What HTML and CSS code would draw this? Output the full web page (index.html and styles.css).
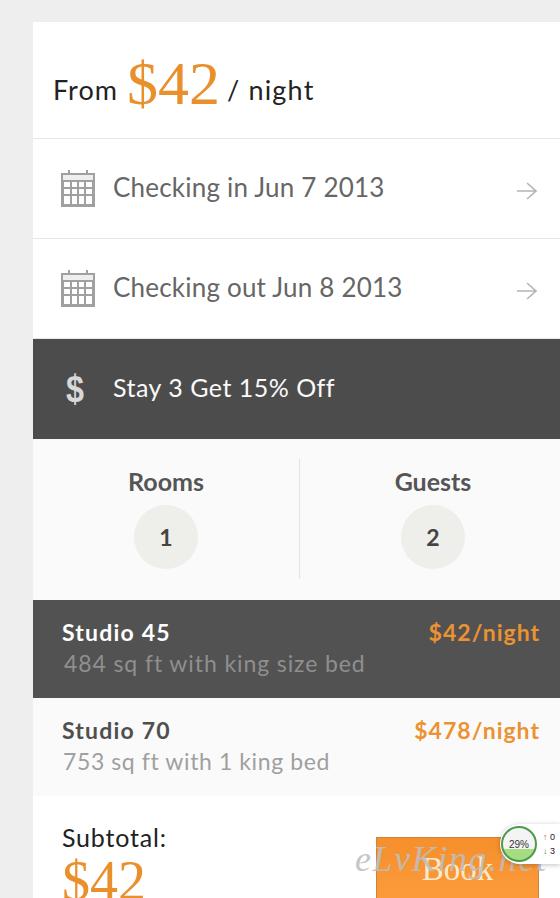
FILE: index.html
```html
<!DOCTYPE html>
<html lang="en">
<head>
<meta charset="utf-8">
<title>Booking</title>
<link rel="stylesheet" href="styles.css">
</head>
<body>
<main class="card">
  <header class="head"><span class="from">From</span><span class="price">$42</span><span class="from night">/ night</span></header>
  <div class="row">
    <svg class="cal" viewBox="0 0 34 37" width="34" height="37"><path d="M8 0v4M26 0v4" stroke="#a0a0a0" stroke-width="2" fill="none"/><path d="M0 3h34v34H0z" fill="#a0a0a0"/><path d="M2 5h30v5H2z" fill="#eee"/><g fill="#fff"><path d="M3 12h6v5H3zM11 12h5v5h-5zM18 12h5v5h-5zM25 12h6v5h-6zM3 19h6v5H3zM11 19h5v5h-5zM18 19h5v5h-5zM25 19h6v5h-6zM3 26h6v8H3zM11 26h5v8h-5zM18 26h5v8h-5zM25 26h6v8h-6z"/></g></svg>
    <span class="label">Checking in Jun 7 2013</span>
    <svg class="arrow" viewBox="0 0 20 18" width="20" height="18"><path d="M0 9h19M10 1l9 8-9 8" stroke="#b5b5b5" stroke-width="1.6" fill="none"/></svg>
  </div>
  <div class="row">
    <svg class="cal" viewBox="0 0 34 37" width="34" height="37"><path d="M8 0v4M26 0v4" stroke="#a0a0a0" stroke-width="2" fill="none"/><path d="M0 3h34v34H0z" fill="#a0a0a0"/><path d="M2 5h30v5H2z" fill="#eee"/><g fill="#fff"><path d="M3 12h6v5H3zM11 12h5v5h-5zM18 12h5v5h-5zM25 12h6v5h-6zM3 19h6v5H3zM11 19h5v5h-5zM18 19h5v5h-5zM25 19h6v5h-6zM3 26h6v8H3zM11 26h5v8h-5zM18 26h5v8h-5zM25 26h6v8h-6z"/></g></svg>
    <span class="label">Checking out Jun 8 2013</span>
    <svg class="arrow" viewBox="0 0 20 18" width="20" height="18"><path d="M0 9h19M10 1l9 8-9 8" stroke="#b5b5b5" stroke-width="1.6" fill="none"/></svg>
  </div>
  <div class="promo"><span class="dollar">$</span><span class="promo-text">Stay 3 Get 15% Off</span></div>
  <section class="counts">
    <div class="count"><span class="count-title">Rooms</span><span class="circle">1</span></div>
    <div class="count"><span class="count-title">Guests</span><span class="circle">2</span></div>
  </section>
  <div class="room room-on">
    <div class="room-top"><span class="room-name">Studio 45</span><span class="room-price">$42/night</span></div>
    <div class="room-desc">484 sq ft with king size bed</div>
  </div>
  <div class="room">
    <div class="room-top"><span class="room-name">Studio 70</span><span class="room-price">$478/night</span></div>
    <div class="room-desc">753 sq ft with 1 king bed</div>
  </div>
  <footer class="foot">
    <div class="sub"><div class="sub-label">Subtotal:</div><div class="sub-price">$42</div></div>
    <button class="book">Book</button>
  </footer>
</main>
<div class="mark">eLvKing.net</div>
<div class="widget">
  <div class="gauge"><span>29%</span></div>
  <div class="stats"><span><i class="up">↑</i> 0</span><span><i class="down">↓</i> 3</span></div>
</div>
</body>
</html>
```
FILE: styles.css
```css
html, body { margin: 0; height: 898px; overflow: hidden; }
body { background: #eeeeee; padding: 22px 0 0 33px; box-sizing: border-box; font-family: Lato, "Noto Sans", sans-serif; position: relative; }
.card { background: #fff; width: 527px; height: 876px; overflow: hidden; }
.head { box-sizing: border-box; border-bottom: 1px solid #e6e6e6; padding: 18px 0 0 20px; display: flex; align-items: center; gap: 9px; height: 117px; }
.from { font-size: 27px; color: #222; letter-spacing: 1px; }
.night { letter-spacing: 1.2px; margin-left: -2px; }
.price { font-family: "Liberation Serif", serif; font-size: 62px; color: #e98f2c; line-height: 1; margin-top: -13px; }
.row { height: 100px; box-sizing: border-box; border-bottom: 1px solid #e6e6e6; display: flex; align-items: center; padding: 0 23px 0 28px; }
.cal { flex: none; margin-right: 18px; }
.label { flex: 1; font-size: 26px; color: #666; letter-spacing: .2px; padding-bottom: 3px; }
.arrow { flex: none; margin-top: 4px; }
.promo { height: 100px; background: #4d4c4d; display: flex; align-items: center; padding-left: 33px; padding-bottom: 4px; box-sizing: border-box; }
.dollar { width: 47px; font-family: "Liberation Sans", sans-serif; font-weight: 700; font-size: 38px; color: #d8d8d8; transform: scaleX(.85); transform-origin: left center; margin-top: 4px; }
.promo-text { font-size: 25px; color: #fafafa; letter-spacing: .5px; }
.counts { height: 161px; box-sizing: border-box; background: #fafafa; display: grid; grid-template-columns: 267px 266px; padding: 20px 0; }
.count { display: flex; flex-direction: column; align-items: center; height: 120px; }
.count:first-child { border-right: 1px solid #e4e4e4; }
.count-title { font-size: 25px; font-weight: 700; color: #555; line-height: 30px; margin-top: 7px; }
.circle { width: 64px; height: 64px; margin-top: 9px; border-radius: 50%; background: #eeeeea; display: flex; align-items: center; justify-content: center; font-size: 23px; font-weight: 700; color: #444; }
.room { height: 98px; box-sizing: border-box; background: #fafafa; padding: 17px 20px 0 29px; }
.room-on { background: #525252; }
.room-top { display: flex; justify-content: space-between; align-items: center; height: 30px; }
.room-name { font-size: 23px; font-weight: 700; color: #4f4f4f; letter-spacing: 1.2px; }
.room-on .room-name { color: #fff; }
.room-price { font-size: 23px; font-weight: 700; color: #ec9232; letter-spacing: 1px; }
.room-desc { font-size: 23px; color: #a09f9f; margin-top: 2px; letter-spacing: .6px; margin-left: 1px; }
.room-on .room-desc { color: #8f8f8f; margin-left: 2px; letter-spacing: .9px; }
.foot { display: flex; justify-content: space-between; padding: 26px 21px 0 29px; }
.sub-label { font-size: 25px; color: #222; letter-spacing: .8px; }
.sub-price { font-family: "Liberation Serif", serif; font-size: 56px; color: #e98f2c; line-height: 58px; }
.book { width: 163px; height: 70px; margin-top: 15px; background: linear-gradient(#f68f2c, #fd9c3c); border: 1px solid #c98540; color: #fbe9c8; font-family: "Liberation Serif", serif; font-size: 33px; padding: 0 0 6px; }
.mark { position: absolute; left: 355px; top: 838px; font-family: "Liberation Serif", serif; font-style: italic; font-size: 36px; letter-spacing: 1.6px; color: rgba(190,190,190,.9); white-space: nowrap; }
.widget { position: absolute; left: 500px; top: 824px; width: 60px; height: 40px; background: #fff; border-radius: 20px 0 0 20px; box-shadow: 0 1px 5px rgba(0,0,0,.25); display: flex; align-items: center; }
.gauge { width: 32px; height: 32px; border: 2px solid #4d9a4d; border-radius: 50%; background: linear-gradient(#f4f4f4 66%, #a6dc82 66%); display: flex; align-items: center; justify-content: center; margin-left: 1px; flex: none; }
.gauge span { font-family: "Liberation Sans", sans-serif; font-size: 10px; color: #333; }
.stats { display: flex; flex-direction: column; font-family: "Liberation Sans", sans-serif; font-size: 9px; line-height: 14px; color: #222; margin-left: 6px; white-space: nowrap; }
.up { color: #c8692a; font-style: normal; font-weight: 700; }
.down { color: #3f8a3f; font-style: normal; font-weight: 700; }
```
